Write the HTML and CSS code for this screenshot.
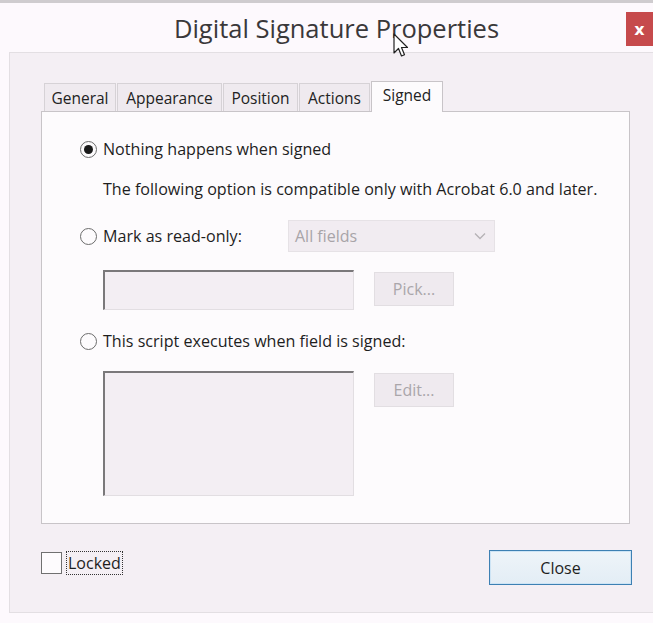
FILE: index.html
```html
<!DOCTYPE html>
<html>
<head>
<meta charset="utf-8">
<link rel="stylesheet" href="styles.css">
</head>
<body>
<div class="window">
  <div class="topline"></div>
  <header class="titlebar">
    <h1 class="title">Digital Signature Properties</h1>
    <div class="close-x">x</div>
    <svg class="cursor" width="16" height="26" viewBox="0 0 16 26"><path d="M1 1 L1 20 L5.5 15.5 L8.5 23 L11.5 21.8 L8.5 14.5 L14.5 14.5 Z" fill="#fff" stroke="#222" stroke-width="1.2" stroke-linejoin="round"/></svg>
  </header>
  <main class="client">
    <div class="tabs">
      <div class="tab tab-general">General</div>
      <div class="tab tab-appearance">Appearance</div>
      <div class="tab tab-position">Position</div>
      <div class="tab tab-actions">Actions</div>
      <div class="tab tab-signed active">Signed</div>
    </div>
    <section class="panel">
      <div class="option first">
        <span class="radio checked"></span><span>Nothing happens when signed</span>
      </div>
      <p class="note">The following option is compatible only with Acrobat 6.0 and later.</p>
      <div class="option second">
        <span class="radio"></span><span class="label-ro">Mark as read-only:</span>
        <div class="select"><span>All fields</span>
          <svg class="chev" width="12" height="8" viewBox="0 0 12 8"><path d="M1 1.5 L6 6.5 L11 1.5" fill="none" stroke="#b5b1b5" stroke-width="1.3"/></svg>
        </div>
      </div>
      <div class="fieldrow">
        <div class="textbox small"></div>
        <div class="btn disabled">Pick...</div>
      </div>
      <div class="option third">
        <span class="radio"></span><span>This script executes when field is signed:</span>
      </div>
      <div class="fieldrow script">
        <div class="textbox large"></div>
        <div class="btn disabled">Edit...</div>
      </div>
    </section>
    <footer class="bottom">
      <label class="locked"><span class="checkbox"></span><span class="focus">Locked</span></label>
      <div class="btn close">Close</div>
    </footer>
  </main>
</div>
</body>
</html>
```

FILE: styles.css
```css
* { box-sizing: border-box; }
html, body { margin: 0; padding: 0; }
body {
  width: 653px;
  height: 623px;
  overflow: hidden;
  background: #fdf9fd;
  font-family: "Open Sans", "Noto Sans", sans-serif;
  color: #1e1e1e;
}
.window { position: relative; width: 653px; height: 623px; }
.topline { height: 3px; background: #cfcccf; }
.titlebar {
  position: relative;
  height: 49px;
  display: flex;
  align-items: center;
  justify-content: center;
}
.title {
  margin: 0;
  font-weight: 400;
  font-size: 25.5px;
  color: #3a383a;
  position: relative;
  left: 10px;
}
.close-x {
  position: absolute;
  right: 0;
  top: 9px;
  width: 27px;
  height: 34px;
  background: #c64a4c;
  color: #fff;
  font-family: "DejaVu Sans", sans-serif;
  font-weight: bold;
  font-size: 16px;
  display: flex;
  align-items: center;
  justify-content: center;
}
.cursor { position: absolute; left: 393px; top: 30px; }
.client {
  margin-left: 9px;
  width: 660px;
  height: 561px;
  background: #f4eff4;
  border: 1px solid #e3dfe3;
  padding: 27px 0 0 31px;
}
.tabs { display: flex; align-items: flex-end; height: 31px; padding-left: 3px; }
.tab {
  height: 28px;
  margin-right: 1px;
  border: 1px solid #d6d2d6;
  border-bottom: none;
  background: #efeaef;
  font-size: 15.5px;
  color: #222;
  display: flex;
  align-items: center;
  justify-content: center;
}
.tab-general { width: 72px; }
.tab-appearance { width: 105px; }
.tab-position { width: 75px; }
.tab-actions { width: 71px; }
.tab.active {
  width: 72px;
  height: 31px;
  background: #fdfbfd;
  border-color: #c8c4c8;
  padding-bottom: 4px;
  position: relative;
  top: 1px;
  z-index: 1;
}
.panel {
  width: 589px;
  height: 413px;
  background: #fdfbfd;
  border: 1px solid #c8c4c8;
  padding: 27px 0 0 38px;
}
.option {
  display: flex;
  align-items: center;
  height: 20px;
  font-size: 16.1px;
  color: #1e1e1e;
}
.radio {
  width: 17px;
  height: 17px;
  border-radius: 50%;
  border: 1px solid #6c6c6c;
  background: #fdfbfd;
  margin-right: 6px;
  flex: none;
  display: flex;
  align-items: center;
  justify-content: center;
}
.radio.checked::after {
  content: "";
  width: 9px;
  height: 9px;
  border-radius: 50%;
  background: #1a1a1a;
}
.note {
  margin: 20px 0 0 23px;
  font-size: 16.1px;
  line-height: 20px;
  color: #1e1e1e;
}
.option.second { margin-top: 27px; }
.label-ro { width: 185px; }
.select {
  width: 207px;
  height: 32px;
  border: 1px solid #e6e2e6;
  background: #f1ecf1;
  display: flex;
  align-items: center;
  justify-content: space-between;
  padding: 0 8px 0 6px;
  color: #a8a4a8;
  font-size: 16px;
}
.fieldrow {
  display: flex;
  align-items: flex-start;
  margin-top: 24px;
  margin-left: 23px;
}
.textbox {
  width: 251px;
  background: #f3eef3;
  border-top: 2px solid #7a787a;
  border-left: 2px solid #7a787a;
  border-right: 1px solid #e2dee2;
  border-bottom: 1px solid #e2dee2;
}
.textbox.small { height: 40px; }
.textbox.large { height: 125px; }
.btn {
  display: flex;
  align-items: center;
  justify-content: center;
  font-size: 16px;
}
.btn.disabled {
  width: 80px;
  height: 34px;
  margin-left: 20px;
  margin-top: 2px;
  background: #efeaef;
  border: 1px solid #e2dee2;
  color: #aaa6aa;
}
.option.third { margin-top: 21px; }
.fieldrow.script { margin-top: 20px; }
.bottom {
  display: flex;
  justify-content: space-between;
  align-items: flex-start;
  width: 591px;
  margin-top: 27px;
}
.locked {
  display: flex;
  align-items: center;
  font-size: 16px;
  color: #1e1e1e;
}
.checkbox {
  width: 21px;
  height: 22px;
  border: 1px solid #707070;
  background: #fdfbfd;
  margin-right: 4px;
}
.focus {
  border: 1px dotted #333;
  padding: 0 1px;
  height: 24px;
  display: flex;
  align-items: center;
}
.btn.close {
  width: 143px;
  height: 35px;
  border: 1px solid #3d80b3;
  background: linear-gradient(#eef4f9, #e3edf5);
  color: #1e1e1e;
  font-size: 16px;
  box-shadow: inset 0 0 0 1px #cde4f5;
  margin-top: -1px;
}
```
